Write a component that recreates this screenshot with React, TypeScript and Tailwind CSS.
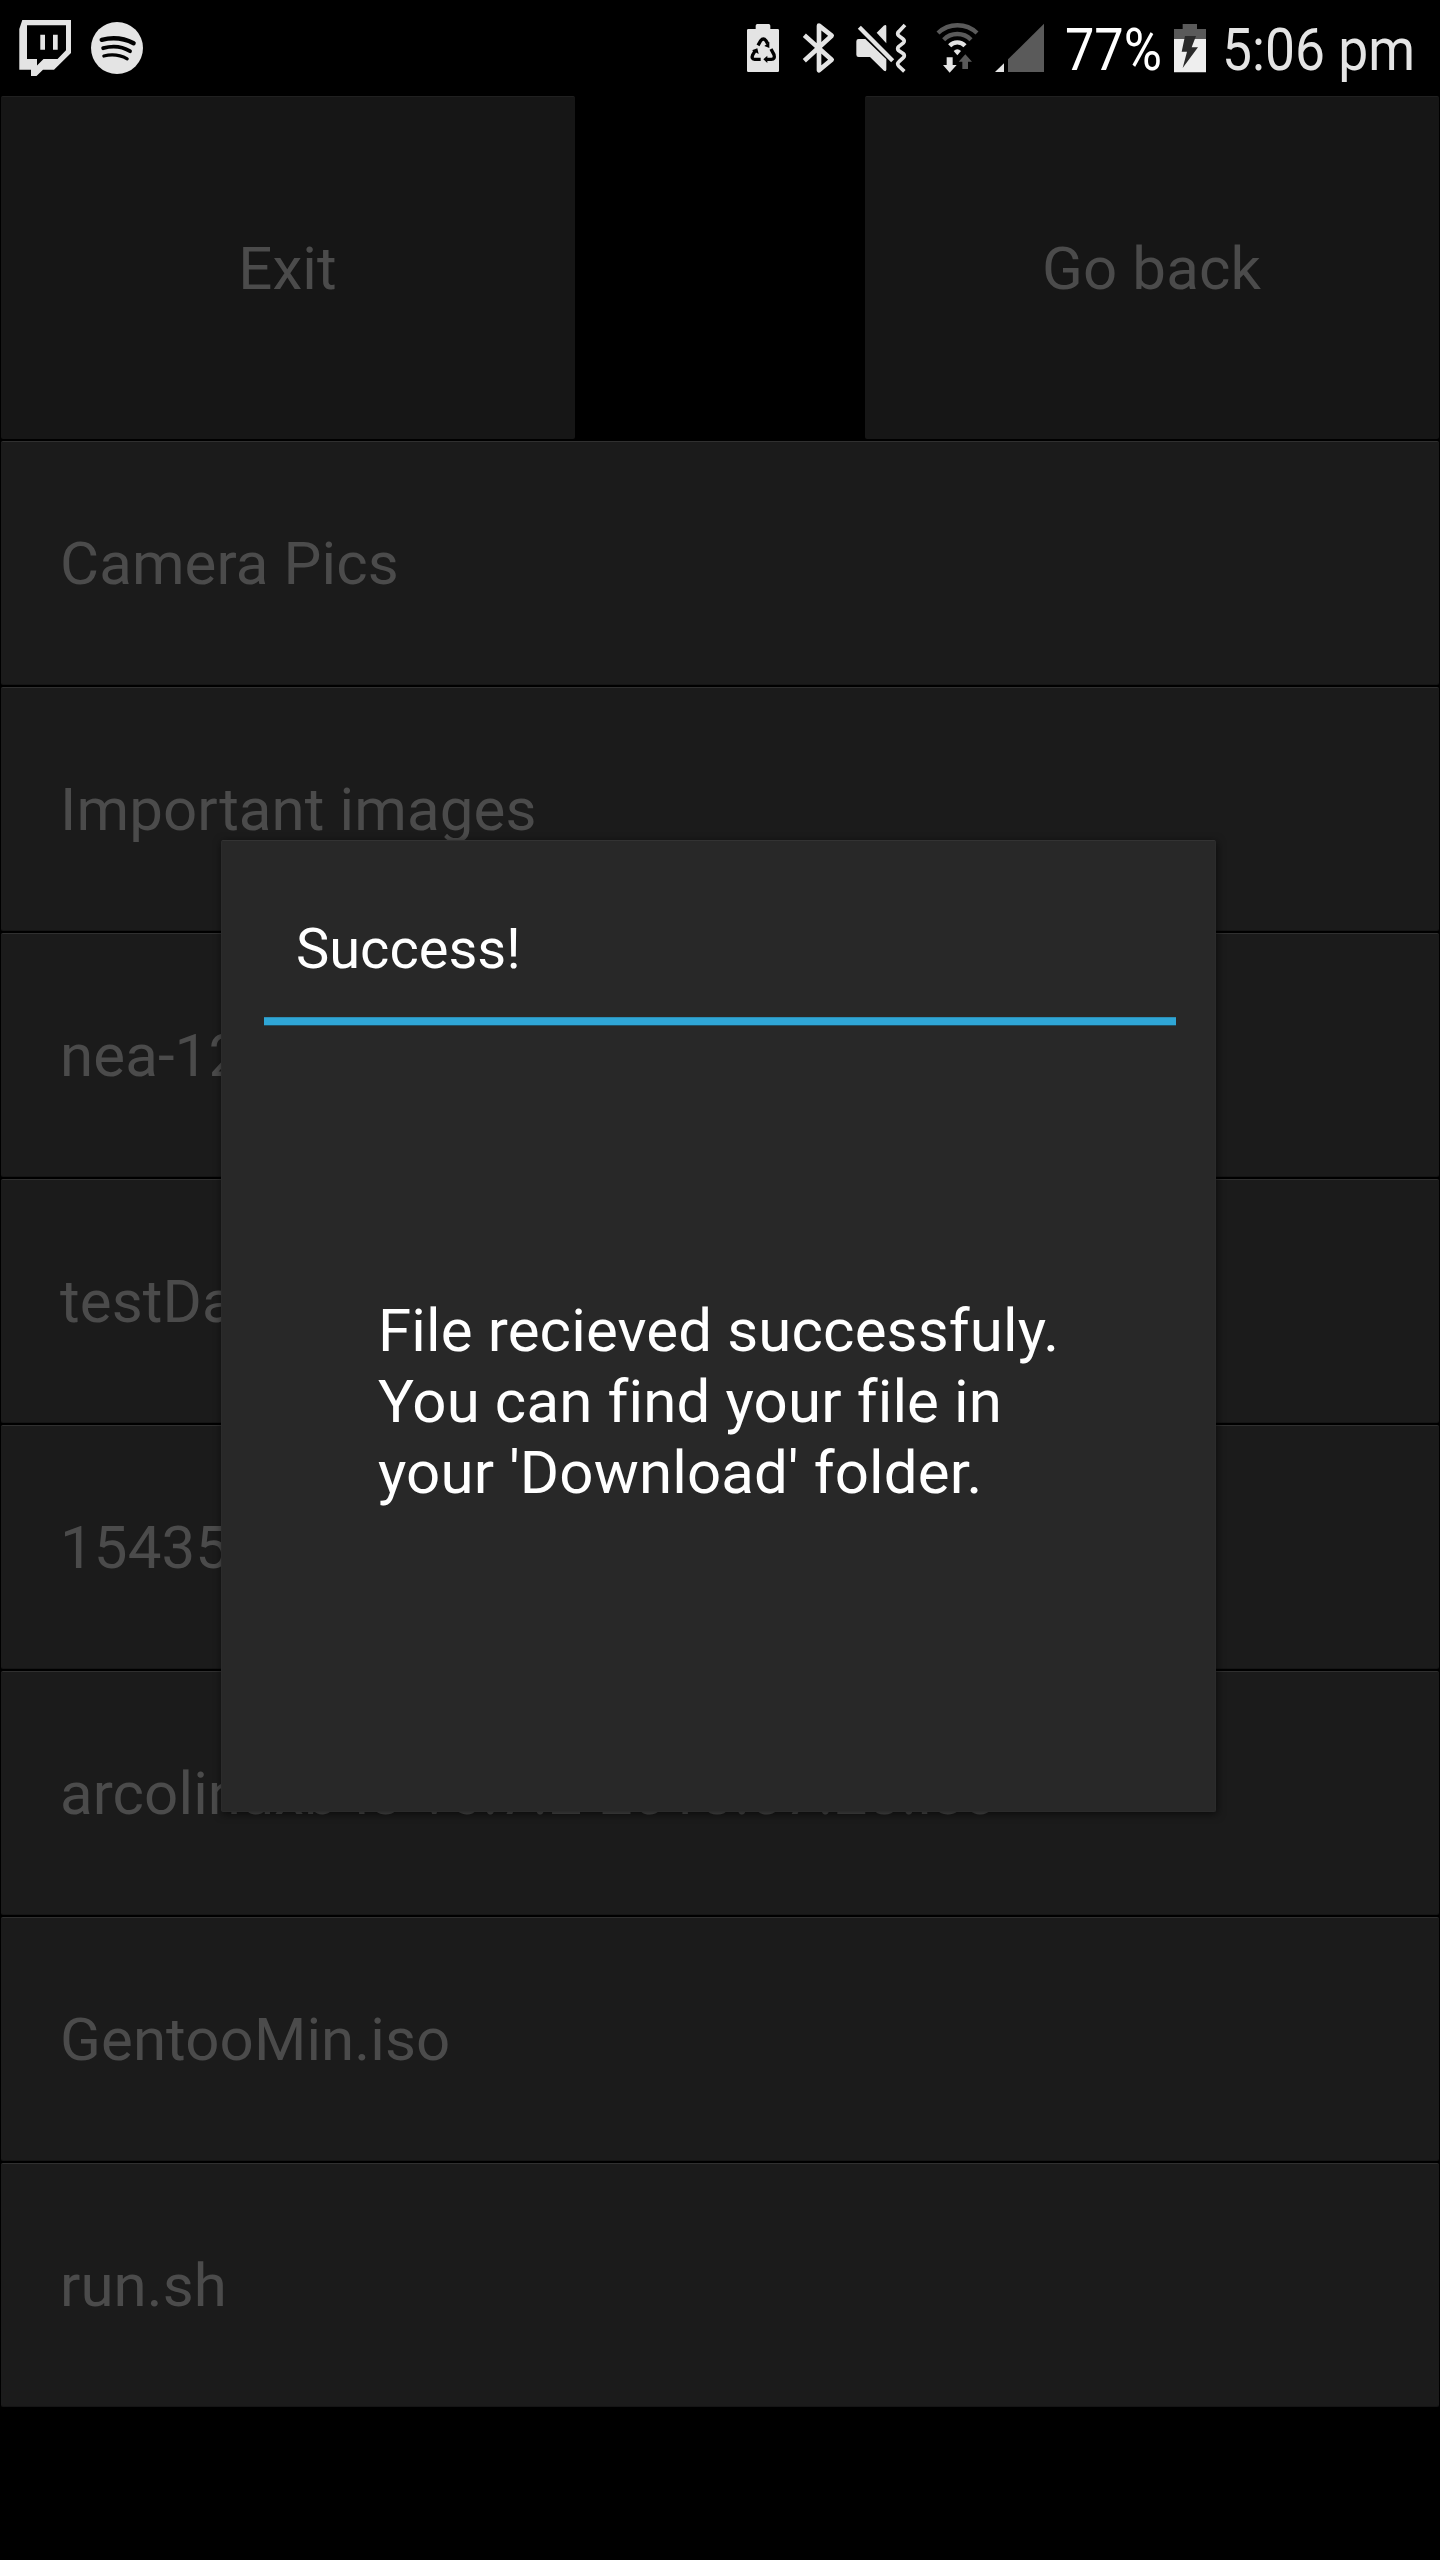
import React from "react";

const LIGHT = "#e4e4e4";
const DIM = "#5a5a5a";

const files = [
  "Camera Pics",
  "Important images",
  "nea-12",
  "testData",
  "15435",
  "arcolinuxb-i3-v6.7.2-2018.07.28.iso",
  "GentooMin.iso",
  "run.sh",
];

function TwitchIcon() {
  return (
    <svg className="h-14 w-[52px] shrink-0" viewBox="19 20 52 56">
      <path
        fill={LIGHT}
        fillRule="evenodd"
        d="M22.3 20H71V53L54 69.7H43L36.5 76H31V69.7H19.3V29ZM27 25.3V59H37V65.5L43.5 59H57.5L66 50.3V25.3Z"
      />
      <path fill={LIGHT} d="M40.3 34.7H45V49.7H40.3ZM53 34.7H57.7V49.7H53Z" />
    </svg>
  );
}

function SpotifyIcon() {
  return (
    <svg className="ml-5 h-14 w-[52px] shrink-0" viewBox="91 20 52 56">
      <circle cx="117" cy="48" r="26" fill={LIGHT} />
      <g fill="none" stroke="#000" strokeLinecap="round">
        <path strokeWidth="4.4" d="M101.7 39.8Q119 35.6 133.6 43.2" />
        <path strokeWidth="3.9" d="M103.2 48.2Q118 44 130 51.2" />
        <path strokeWidth="3.2" d="M103.8 56Q116.5 53 127.2 58.8" />
      </g>
    </svg>
  );
}

function BatterySaverIcon() {
  return (
    <svg className="h-14 w-8 shrink-0" viewBox="51 60 96 168">
      <path fill={LIGHT} d="M77 87V77q0-5 5-5h34q5 0 5 5v10h22q4 0 4 4v121q0 4-4 4H55q-4 0-4-4V91q0-4 4-4Z" />
      <g fill="none" stroke="#000" strokeWidth="10">
        <path d="M84 136L92 122Q100 112 108 122L113 131" />
        <path d="M123 147L132 164Q136 178 124 178H110" />
        <path d="M92 178H74Q63 177 68 165L75 153" />
      </g>
      <path d="M103 138L118 126V144ZM112 167V189L100 178ZM66 151L82 145L86 162Z" />
    </svg>
  );
}

function BluetoothIcon() {
  return (
    <svg className="ml-[23px] h-14 w-[33px] shrink-0" viewBox="216 60 99 168">
      <path
        fill="none"
        stroke={LIGHT}
        strokeWidth="14"
        strokeLinejoin="round"
        d="M223 106L305 179L267 211V77L305 107L223 182"
      />
    </svg>
  );
}

function MuteVibrateIcon() {
  return (
    <svg className="ml-5 h-14 w-[52px] shrink-0" viewBox="375 60 156 168">
      <path fill={LIGHT} d="M386 117H406L469 178V209Q468 216 462 212L420 171H386Q379 171 379 164V124Q379 117 386 117Z" />
      <path fill={LIGHT} d="M440 98L461 77Q468 72 469 78V130Z" />
      <path fill="none" stroke={LIGHT} strokeWidth="13" d="M388 82L488 182" />
      <path
        fill="none"
        stroke={LIGHT}
        strokeWidth="11"
        d="M525 75L506 95Q500 101 506 107L519 117Q526 123 520 129L506 140Q500 146 506 152L520 161Q526 167 520 173L507 185Q500 191 506 198L523 214"
      />
    </svg>
  );
}

function WifiIcon() {
  return (
    <svg className="ml-[29px] h-14 w-[43px] shrink-0" viewBox="618 60 129 168">
      <g fill="none" strokeWidth="13">
        <path stroke={DIM} d="M624 99A85 85 0 0 1 741 99" />
        <path stroke={DIM} d="M641 119A58 58 0 0 1 723 119" />
        <path stroke={LIGHT} d="M659 137A32 32 0 0 1 705 137" />
      </g>
      <path fill={LIGHT} d="M671 153Q682 142 693 153L682 166Z" />
      <path fill={LIGHT} d="M650 172H668V195H680L659 218L639 195H650Z" />
      <path fill={DIM} d="M697 207V185H686L706 163L726 185H714V207Z" />
    </svg>
  );
}

function SignalIcon() {
  return (
    <svg className="ml-[15px] h-14 w-[51px] shrink-0" viewBox="792 60 153 168">
      <path fill={LIGHT} d="M795 216L822 190V216Z" />
      <path fill={DIM} d="M834 216V178L942 71V216Z" />
    </svg>
  );
}

function ChargingIcon() {
  return (
    <svg className="h-14 w-8 shrink-0" viewBox="372 60 96 168">
      <path fill={DIM} d="M372 117V87H398V72H441V87H468V117Z" />
      <path fill="#eee" d="M372 117H468V217H372Z" />
      <path fill="#2a2a2a" d="M405 108H438L425 142H444L398 204L411 155H395Z" />
    </svg>
  );
}

function StatusBar() {
  return (
    <header className="flex h-24 items-center pl-[19px] text-[60px] leading-[70px] tracking-normal">
      <TwitchIcon />
      <SpotifyIcon />
      <div className="ml-[604px] flex items-center">
        <BatterySaverIcon />
        <BluetoothIcon />
        <MuteVibrateIcon />
        <WifiIcon />
        <SignalIcon />
        <div className="ml-5 w-[109px] pt-1">
          <span className="inline-block origin-left scale-x-[.87] whitespace-nowrap text-white">77%</span>
        </div>
        <ChargingIcon />
        <div className="ml-4 w-[200px] pt-1">
          <span className="inline-block origin-left scale-x-[.89] whitespace-nowrap text-[#e4e4e4]">5:06 pm</span>
        </div>
      </div>
    </header>
  );
}

function HeaderButton({ label }: { label: string }) {
  return (
    <button className="flex h-[343px] w-[574px] items-center justify-center rounded-[2px] border-t border-[#202020] bg-[#161616] pt-px pr-px text-[#4b4b4b]">
      {label}
    </button>
  );
}

function Dialog() {
  return (
    <section className="absolute top-[840px] left-[221px] h-[972px] w-[995px] rounded-[2px] border border-[#2b2b2b] border-t-[#333] bg-[#282828] pr-[41px] pl-[42px] text-white shadow-[1px_2px_8px_0px_rgba(0,0,0,0.6)]">
      <h1 className="flex h-44 items-end pb-[35px] pl-8 text-[56px] leading-[66px] tracking-normal">Success!</h1>
      <div className="h-[9px] w-[912px] border-t border-b border-t-[#2c8fb6] border-b-[#1f4f63] bg-[#2fa6d6]" />
      <p className="mt-[269px] ml-[114px] w-[720px] leading-[71px] tracking-[0.14px]">
        File recieved successfuly.
        <br />
        You can find your file in
        <br />
        your 'Download' folder.
      </p>
    </section>
  );
}

export default function App() {
  return (
    <div className="relative h-[2560px] w-[1440px] overflow-hidden bg-black font-['Roboto',sans-serif] text-[60px] leading-[70px] tracking-[0.1px] [font-variant-ligatures:none]">
      <StatusBar />
      <nav className="flex justify-between px-px">
        <HeaderButton label="Exit" />
        <HeaderButton label="Go back" />
      </nav>
      <ul className="mx-px mt-0.5 flex flex-col gap-0.5">
        {files.map((name) => (
          <li
            key={name}
            className="flex h-[244px] items-center rounded-[2px] border-t border-b border-t-[#303030] border-b-[#151515] bg-[#1b1b1b] pt-px pl-[59px] whitespace-nowrap text-[#4b4b4b]"
          >
            {name}
          </li>
        ))}
      </ul>
      <Dialog />
    </div>
  );
}
